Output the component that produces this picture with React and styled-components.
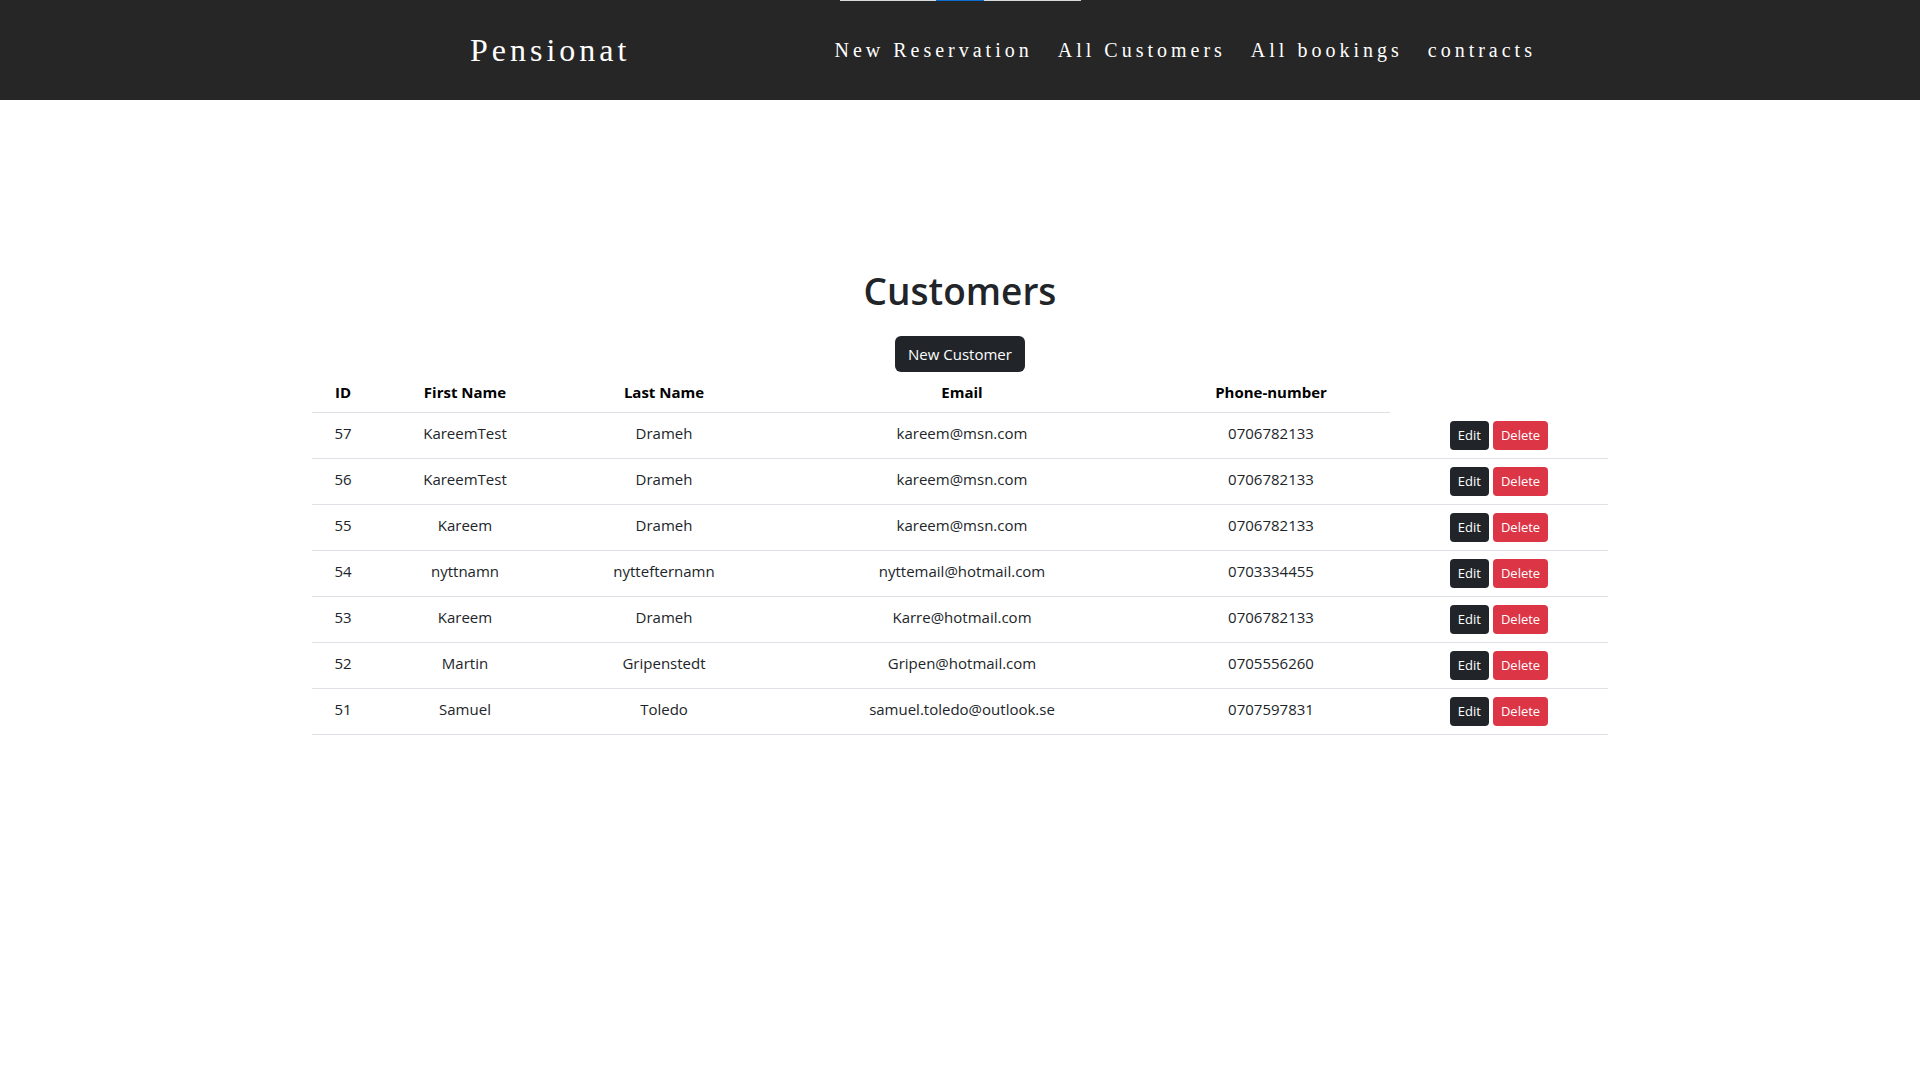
import React from 'react';
import styled, { createGlobalStyle } from 'styled-components';

const GlobalStyle = createGlobalStyle`
    body {
        margin: 0;
        background-color: #fff;
        font-family: "Open Sans", "Noto Sans", sans-serif;
        color: #212529;
    }
`

const NavBar = styled.nav`
    height: 100px;
    background-color: #262626;
    display: flex;
    align-items: center;
    padding-left: 470px;
`

const Brand = styled.div`
    font-family: "Liberation Serif", serif;
    font-size: 32px;
    line-height: 32px;
    letter-spacing: 4px;
    color: #fff;
    margin-right: 204px;
`

const NavLinks = styled.div`
    display: flex;
    gap: 25px;
`

const NavLink = styled.a`
    font-family: "Liberation Serif", serif;
    font-size: 20px;
    line-height: 20px;
    letter-spacing: 4px;
    color: #fff;
    text-decoration: none;
    cursor: pointer;
`

const ProgressTrack = styled.div`
    position: absolute;
    top: 0;
    left: 840px;
    width: 241px;
    height: 1px;
    background-color: #d9d9d9;
`

const ProgressThumb = styled.div`
    margin-left: 96px;
    width: 48px;
    height: 100%;
    background-color: #0a6bd1;
`

const Container = styled.main`
    width: 1296px;
    margin: 0 auto;
    display: flex;
    flex-direction: column;
    align-items: center;
`

const Title = styled.h1`
    font-size: 37px;
    font-weight: 600;
    line-height: 48px;
    margin: 167px 0 21px;
    color: #212529;
`

const Button = styled.button`
    border: none;
    border-radius: ${p => p.small ? '4px' : '6px'};
    font-family: inherit;
    font-size: ${p => p.small ? '13px' : '15px'};
    line-height: ${p => p.small ? '21px' : '24px'};
    padding: ${p => p.small ? '4px 8px' : '6px 13px'};
    color: #fff;
    background-color: ${p => p.danger ? '#dc3545' : '#212529'};
    cursor: pointer;
`

const Table = styled.table`
    width: 100%;
    border-collapse: collapse;
    table-layout: fixed;
`

const Th = styled.th`
    padding: 8px;
    font-size: 15px;
    line-height: 24px;
    font-weight: 700;
    color: #000;
    text-align: center;
    border-bottom: 1px solid #dee2e6;
`

const Td = styled.td`
    padding: 8px;
    font-size: 15px;
    line-height: 24px;
    text-align: center;
    vertical-align: top;
    border-bottom: 1px solid #dee2e6;
`

const Actions = styled.div`
    display: flex;
    justify-content: center;
    gap: 4px;
`

const customers = [
    { id: 57, first: "KareemTest", last: "Drameh", email: "kareem@msn.com", phone: "0706782133" },
    { id: 56, first: "KareemTest", last: "Drameh", email: "kareem@msn.com", phone: "0706782133" },
    { id: 55, first: "Kareem", last: "Drameh", email: "kareem@msn.com", phone: "0706782133" },
    { id: 54, first: "nyttnamn", last: "nyttefternamn", email: "nyttemail@hotmail.com", phone: "0703334455" },
    { id: 53, first: "Kareem", last: "Drameh", email: "Karre@hotmail.com", phone: "0706782133" },
    { id: 52, first: "Martin", last: "Gripenstedt", email: "Gripen@hotmail.com", phone: "0705556260" },
    { id: 51, first: "Samuel", last: "Toledo", email: "samuel.toledo@outlook.se", phone: "0707597831" },
];

const widths = [62, 182, 216, 380, 238, 218];

export default function App()
{
    return (
        <>
            <GlobalStyle />
            <ProgressTrack><ProgressThumb /></ProgressTrack>
            <NavBar>
                <Brand>Pensionat</Brand>
                <NavLinks>
                    <NavLink>New Reservation</NavLink>
                    <NavLink>All Customers</NavLink>
                    <NavLink>All bookings</NavLink>
                    <NavLink>contracts</NavLink>
                </NavLinks>
            </NavBar>
            <Container>
                <Title>Customers</Title>
                <Button>New Customer</Button>
                <Table>
                    <colgroup>
                        {widths.map((w, i) => <col key={i} style={{ width: w }} />)}
                    </colgroup>
                    <thead>
                        <tr>
                            <Th>ID</Th>
                            <Th>First Name</Th>
                            <Th>Last Name</Th>
                            <Th>Email</Th>
                            <Th>Phone-number</Th>
                        </tr>
                    </thead>
                    <tbody>
                        {customers.map(c => (
                            <tr key={c.id}>
                                <Td>{c.id}</Td>
                                <Td>{c.first}</Td>
                                <Td>{c.last}</Td>
                                <Td>{c.email}</Td>
                                <Td>{c.phone}</Td>
                                <Td>
                                    <Actions>
                                        <Button small>Edit</Button>
                                        <Button small danger>Delete</Button>
                                    </Actions>
                                </Td>
                            </tr>
                        ))}
                    </tbody>
                </Table>
            </Container>
        </>
    );
}
